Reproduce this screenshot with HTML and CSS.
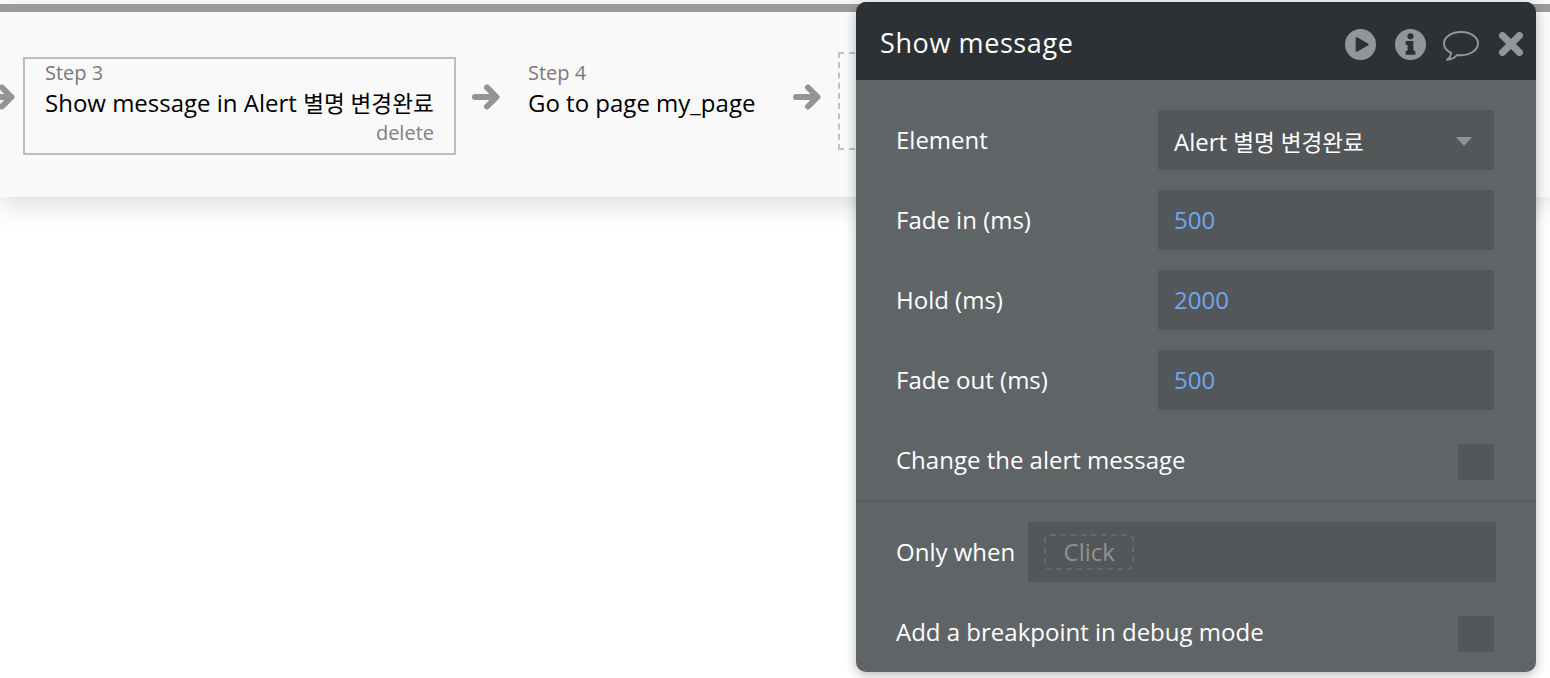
FILE: index.html
```html
<!DOCTYPE html>
<html lang="en">
<head>
<meta charset="utf-8">
<title>Show message</title>
<link rel="stylesheet" href="styles.css">
</head>
<body>
<div class="workflow">
  <div class="topbar"></div>
  <div class="steps">
    <svg class="arrow arrow-cut" viewBox="0 0 28 28"><path d="M3 14H24M15 4.500L24.500 14L15 23.500" /></svg>
    <div class="step step-active">
      <div class="step-num">Step 3</div>
      <div class="step-name">Show message in Alert <span class="ko">별명 변경완료</span></div>
      <div class="step-del">delete</div>
    </div>
    <svg class="arrow" viewBox="0 0 28 28"><path d="M3 14H24M15 4.500L24.500 14L15 23.500" /></svg>
    <div class="step">
      <div class="step-num">Step 4</div>
      <div class="step-name">Go to page my_page</div>
    </div>
    <svg class="arrow" viewBox="0 0 28 28"><path d="M3 14H24M15 4.500L24.500 14L15 23.500" /></svg>
    <div class="step-new"></div>
  </div>
</div>

<section class="panel">
  <header class="panel-head">
    <div class="panel-title">Show message</div>
    <div class="panel-icons">
      <svg class="ic" viewBox="0 0 32 32"><circle cx="16" cy="16" r="16" fill="#8f979b"/><path d="M12 9.500L23.500 16L12 22.500Z" fill="#2b3134" stroke="#2b3134" stroke-width="2" stroke-linejoin="round"/></svg>
      <svg class="ic" viewBox="0 0 32 32"><circle cx="16" cy="16" r="16" fill="#8f979b"/><circle cx="16" cy="7.500" r="3.200" fill="#2b3134"/><path d="M11 12.500H19V22.500H21V26.500H11V22.500H13V16.500H11Z" fill="#2b3134"/></svg>
      <svg class="ic-chat" viewBox="0 0 38 32"><path d="M19 2C9.500 2 2 7 2 13.500C2 17.500 4.800 20.800 9 22.800C9 25.500 7.500 28.500 4.500 30C9.500 29.500 13 27.500 15 25C16.300 25.200 17.600 25.200 19 25.200C28.500 25.200 36 20 36 13.500C36 7 28.500 2 19 2Z" fill="none" stroke="#8f979b" stroke-width="2"/></svg>
      <svg class="ic-close" viewBox="1 1 24 24"><path d="M4.500 4.500L21.500 21.500M21.500 4.500L4.500 21.500" stroke="#8f979b" stroke-width="7" stroke-linecap="round"/></svg>
    </div>
  </header>
  <div class="panel-body">
    <div class="row">
      <div class="label">Element</div>
      <div class="field field-select"><span>Alert <span class="ko">별명 변경완료</span></span><i class="caret"></i></div>
    </div>
    <div class="row">
      <div class="label">Fade in (ms)</div>
      <div class="field field-num">500</div>
    </div>
    <div class="row">
      <div class="label">Hold (ms)</div>
      <div class="field field-num">2000</div>
    </div>
    <div class="row">
      <div class="label">Fade out (ms)</div>
      <div class="field field-num">500</div>
    </div>
    <div class="row row-check">
      <div class="label">Change the alert message</div>
      <div class="check"></div>
    </div>
  </div>
  <div class="panel-foot">
    <div class="row-when">
      <div class="label">Only when</div>
      <div class="when-field"><span class="click">Click</span></div>
    </div>
    <div class="row row-check row-debug">
      <div class="label">Add a breakpoint in debug mode</div>
      <div class="check"></div>
    </div>
  </div>
</section>
</body>
</html>
```
FILE: styles.css
```css
* { box-sizing: border-box; }
html, body { margin: 0; height: 100%; }
body {
  background: #fff;
  font-family: "Open Sans", "Noto Sans CJK KR", sans-serif;
  overflow: hidden;
  padding-top: 4px;
  position: relative;
}
.ko { font-size: 22.6px; }
.workflow {
  height: 193px;
  background: #f9f9f9;
  box-shadow: 0 6px 28px rgba(0, 0, 0, .16);
  display: flex;
  flex-direction: column;
}
.topbar { height: 8px; background: #9b9b9b; flex: none; }
.steps {
  flex: 1;
  display: flex;
  align-items: flex-start;
  padding: 45px 0 0 0;
  margin-left: -13px;
}
.arrow {
  width: 28px;
  height: 28px;
  flex: none;
  margin-top: 26px;
  fill: none;
  stroke: #949494;
  stroke-width: 6;
  stroke-linecap: round;
  stroke-linejoin: round;
}
.arrow-cut { margin-right: 8px; }
.step {
  width: 276px;
  height: 98px;
  padding: 3px 20px 0 19px;
  flex: none;
  margin-left: 9px;
  margin-right: 8px;
  color: #000;
}
.step-active {
  width: 433px;
  padding: 1px 20px 0 20px;
  margin-left: 0;
  margin-right: 16px;
  border: 2px solid #b4c0c6;
}
.step-num { font-size: 20px; line-height: 26px; color: #7a7a7a; }
.step-name { font-size: 24px; line-height: 34px; white-space: nowrap; }
.step-del { font-size: 20px; line-height: 24px; color: #7f7f7f; text-align: right; }
.step-new {
  width: 60px;
  height: 98px;
  margin-top: -5px;
  margin-left: 17px;
  border: 2px dashed #b9c4ca;
}
.panel {
  position: absolute;
  left: 856px;
  top: 2px;
  width: 680px;
  height: 670px;
  background: #5f6467;
  border-radius: 10px;
  box-shadow: 0 3px 12px rgba(0, 0, 0, .28);
  color: #fff;
  overflow: hidden;
}
.panel-head {
  height: 78px;
  background: #2b3134;
  display: flex;
  align-items: center;
  justify-content: space-between;
  padding: 0 13px 0 24px;
}
.panel-title { font-size: 27px; letter-spacing: .6px; margin-top: 2px; }
.panel-icons { display: flex; align-items: center; margin-top: 6px; }
.ic { width: 31px; height: 31px; margin-right: 19px; }
.ic-chat { width: 38px; height: 32px; margin: 3px 19px 0 -3px; }
.ic-close { width: 24px; height: 24px; }
.panel-body {
  padding: 30px 42px 0 40px;
  height: 422px;
  border-bottom: 2px solid #565b5e;
  display: flex;
  flex-direction: column;
  gap: 20px;
}
.row { display: flex; align-items: center; justify-content: space-between; height: 60px; }
.label { font-size: 24px; color: #fff; white-space: nowrap; position: relative; top: -1px; }
.row-check .label { top: -3px; }
.field {
  width: 336px;
  height: 60px;
  background: #54575a;
  border-radius: 2px;
  padding: 0 16px;
  font-size: 24px;
  display: flex;
  align-items: center;
}
.field-num { color: #6ea8ee; padding-bottom: 2px; }
.field-select { justify-content: space-between; padding: 2px 22px 0 16px; }
.caret {
  width: 0;
  height: 0;
  border-left: 8px solid transparent;
  border-right: 8px solid transparent;
  border-top: 9px solid #8f9396;
}
.row-check { height: 36px; margin-top: 14px; }
.check { width: 36px; height: 36px; background: #54575a; border-radius: 2px; }
.panel-foot { padding: 20px 40px 0 40px; }
.row-when { display: flex; align-items: center; height: 60px; gap: 13px; }
.when-field {
  flex: 1;
  height: 60px;
  background: #54575a;
  border-radius: 2px;
  padding-left: 16px;
  display: flex;
  align-items: center;
}
.click {
  width: 90px;
  height: 36px;
  border: 2px dashed #65696c;
  border-radius: 6px;
  font-size: 24px;
  line-height: 32px;
  text-align: center;
  color: #8e9194;
}
.row-debug { margin-top: 34px; margin-right: 2px; }
```
